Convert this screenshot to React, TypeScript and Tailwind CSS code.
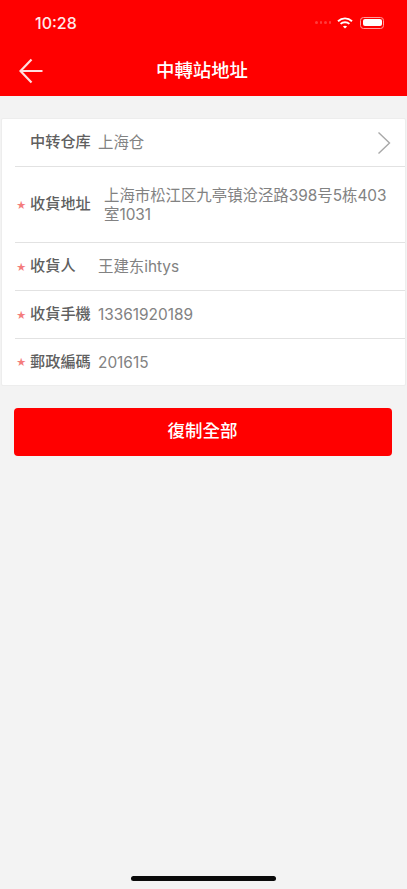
const cjk = "font-['Inter','Noto_Sans_CJK_TC',sans-serif]";

function Row({ label, value, star = true, tall = false, chevron = false, last = false }: { label: string; value: string; star?: boolean; tall?: boolean; chevron?: boolean; last?: boolean }) {
  return (
    <div className={`flex items-center ml-[13px] ${tall ? 'h-[76px]' : last ? 'h-[46px]' : 'h-[48px]'} ${last ? '' : 'border-b border-[#e2e2e2]'}`}>
      <span className="w-[15px] text-[10px] leading-none text-[#f47c7c] pl-[1px]">{star ? '★' : ''}</span>
      <span className="w-[68px] text-[15.2px] font-medium text-[#5f5f5f] whitespace-nowrap">{label}</span>
      <span className={`flex-1 text-[15.4px] leading-[19px] text-[#828282] ${tall ? 'pl-[6px] pr-[14px]' : ''}`}>{value}</span>
      {chevron && (
        <svg width="14" height="24" viewBox="0 0 14 24" fill="none" className="mr-[14px]">
          <path d="M1.5 1.5L12.5 12L1.5 22.5" stroke="#a8a8a8" strokeWidth="1.4" />
        </svg>
      )}
    </div>
  );
}

export default function App() {
  return (
    <div className={`w-[407px] h-[889px] bg-[#f3f3f3] flex flex-col relative overflow-hidden ${cjk}`}>
      <div className="bg-[#ff0000] h-[96px] shrink-0 text-white">
        <div className="h-[45px] flex items-center justify-between pl-[35px] pr-[23px]">
          <span className="text-[16px] font-medium text-[#ffe9e9]">10:28</span>
          <div className="flex items-center gap-[5px]">
            <div className="flex gap-[2px] mr-[1px]">
              <i className="w-[2.5px] h-[2.5px] rounded-full bg-[#ff3c3c]" />
              <i className="w-[2.5px] h-[2.5px] rounded-full bg-[#ff3c3c]" />
              <i className="w-[2.5px] h-[2.5px] rounded-full bg-[#ff3c3c]" />
              <i className="w-[2.5px] h-[2.5px] rounded-full bg-[#ff3c3c]" />
            </div>
            <svg width="16" height="12" viewBox="0 0 16 12" fill="none">
              <path d="M1 4.2C5 .4 11 .4 15 4.2" stroke="#fff" strokeWidth="1.9" />
              <path d="M3.6 6.9C6 4.6 10 4.6 12.4 6.9" stroke="#fff" strokeWidth="1.9" />
              <path d="M8 11.6L5.9 9.4C7 8.4 9 8.4 10.1 9.4Z" fill="#fff" />
            </svg>
            <div className="w-[24px] h-[12px] rounded-[3.5px] border border-[#ff9c9c] p-[1.5px] ml-[2px]">
              <div className="w-full h-full rounded-[2px] bg-white" />
            </div>
          </div>
        </div>
        <div className="h-[51px] relative flex items-center justify-center">
          <svg width="24" height="26" viewBox="0 0 24 26" fill="none" className="absolute left-[19px] top-[13px]">
            <path d="M12.5 1.5L1.5 13L12.5 24.5M1.5 13H23.5" stroke="#ffdede" strokeWidth="2.2" />
          </svg>
          <span className="text-[18.4px] font-medium text-white pr-[3px]">中轉站地址</span>
        </div>
      </div>

      <div className="mt-[22px] mx-[1px] bg-white border border-[#ededed] rounded-[2px]">
        <Row label="中转仓库" value="上海仓" star={false} chevron />
        <Row label="收貨地址" value="上海市松江区九亭镇沧泾路398号5栋403室1031" tall />
        <Row label="收貨人" value="王建东ihtys" />
        <Row label="收貨手機" value="13361920189" />
        <Row label="郵政編碼" value="201615" last />
      </div>

      <button className="mt-[22px] ml-[14px] mr-[15px] h-[48px] bg-[#ff0000] rounded-[4px] text-white text-[17.5px] font-medium pb-[1px] pr-[1px]">復制全部</button>

      <div className="absolute bottom-[8px] left-[131px] w-[145px] h-[5px] rounded-full bg-[#0a0a0a]" />
    </div>
  );
}
